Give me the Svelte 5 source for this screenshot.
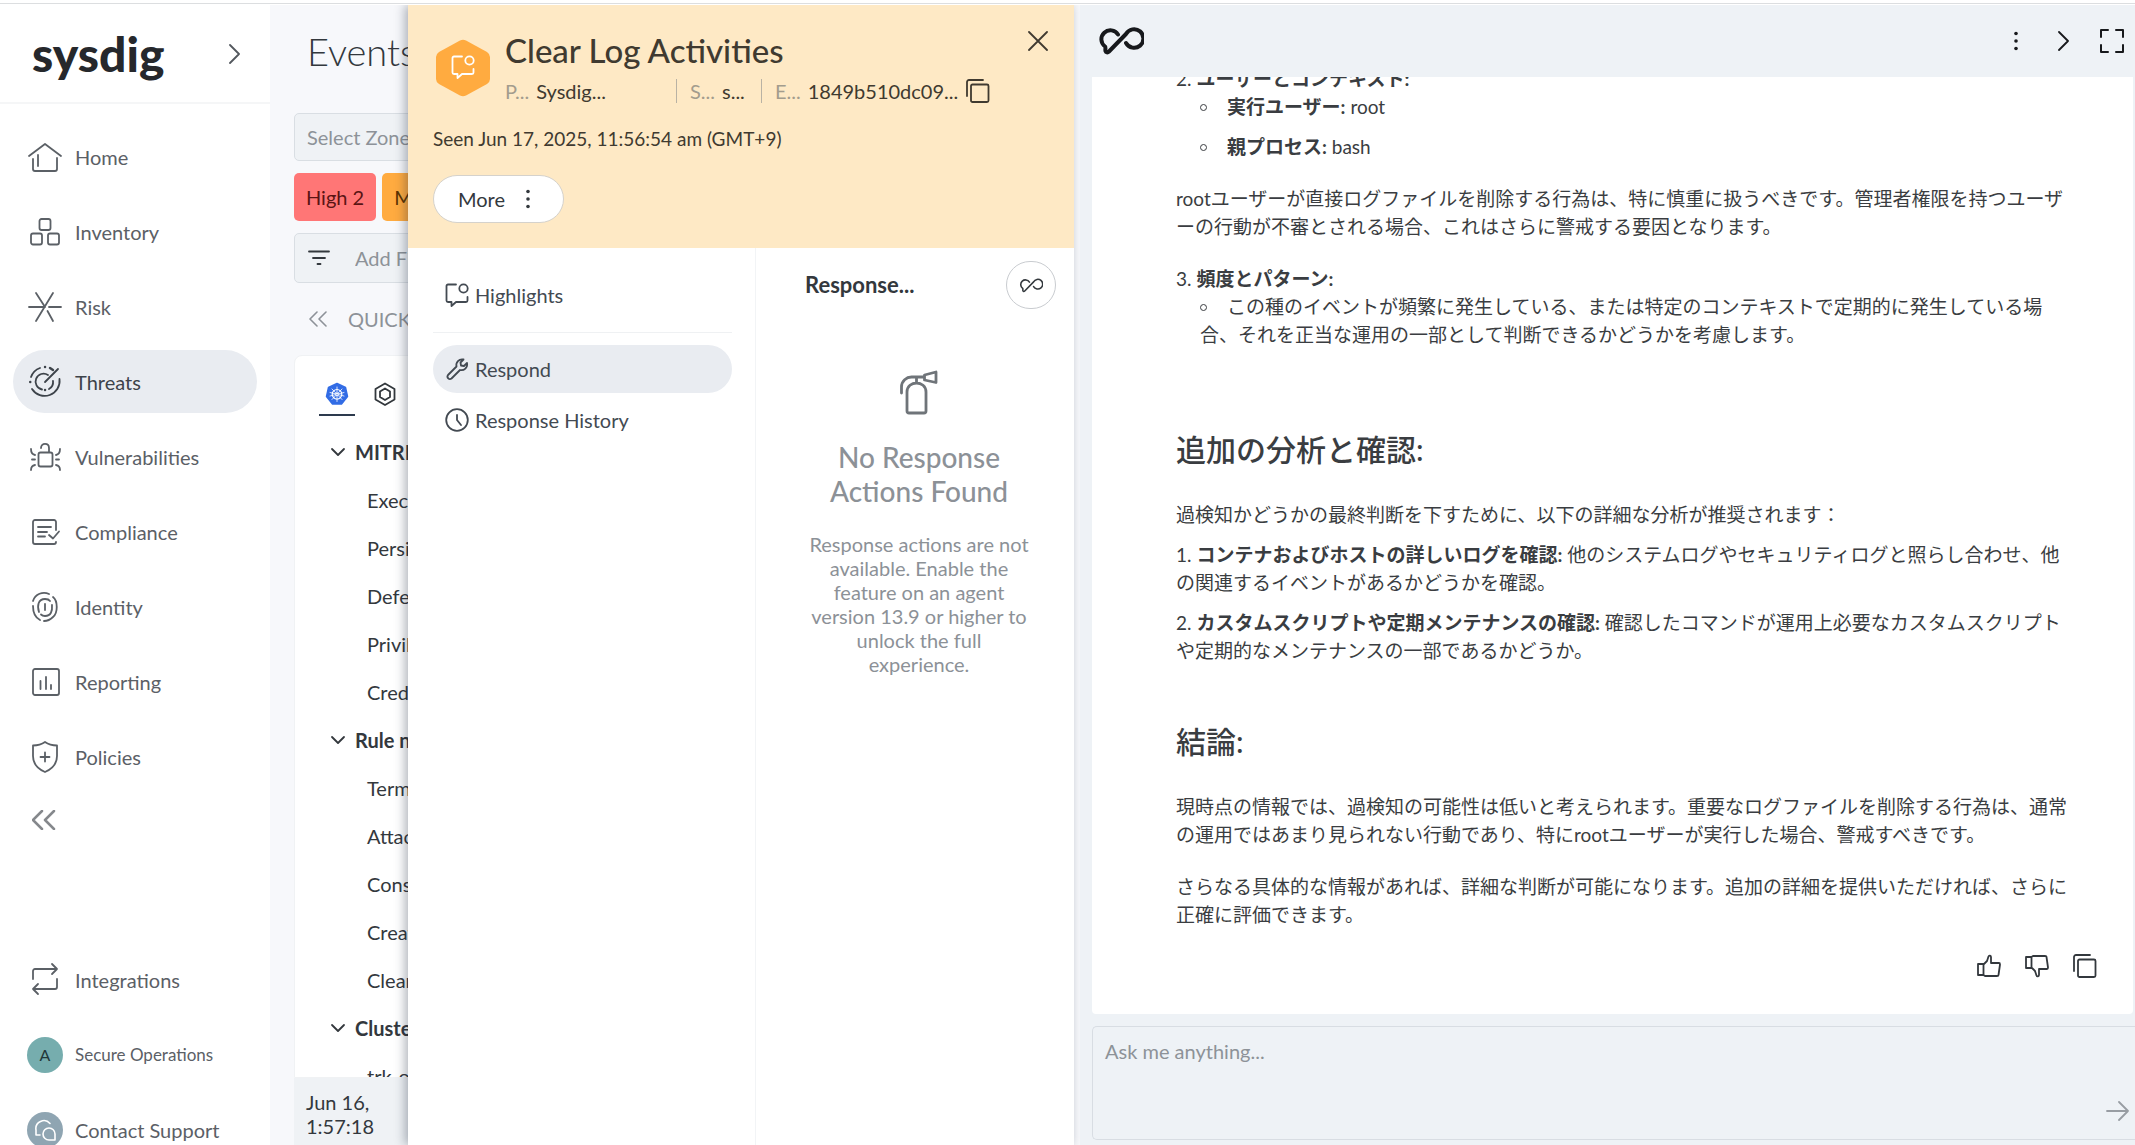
<script>
  let selectedNav = $state('Threats');
  let selectedTab = $state('Respond');
  let message = $state('');

  const navItems = ['Home', 'Inventory', 'Risk', 'Threats', 'Vulnerabilities', 'Compliance', 'Identity', 'Reporting', 'Policies'];

  const filterGroups = [
    { name: 'MITRE', items: ['Execution', 'Persistence', 'Defense Evasion', 'Privilege Escalation', 'Credential Access'] },
    { name: 'Rule name', items: ['Terminal shell', 'Attach to container', 'Console login', 'Create symlink', 'Clear Log Activities'] },
    { name: 'Cluster', items: ['trk-ops'] }
  ];
</script>

{#snippet navIcon(name)}
  <svg class="nav-icon" width="36" height="36" viewBox="0 0 36 36" fill="none" stroke="currentColor" stroke-width="1.8" stroke-linecap="round" stroke-linejoin="round">
    {#if name === 'Home'}
      <path d="M2 17 18 5l16 12M6 20v10a2 2 0 0 0 2 2h20a2 2 0 0 0 2-2V19M11 16v11" />
    {:else if name === 'Inventory'}
      <rect x="12.500" y="5" width="11" height="11" rx="2" />
      <rect x="4" y="19.500" width="11" height="11" rx="2" />
      <rect x="21" y="19.500" width="11" height="11" rx="2" />
    {:else if name === 'Risk'}
      <path d="M2 18h16M22 18h12M9 4l9 14M26 4 9 32M20.500 22 26 32" />
    {:else if name === 'Threats'}
      <path d="M32.500 15A15 15 0 0 1 5 25M4 13a15 15 0 0 1 9-9M18 18 31 5" />
      <path d="M21 11a8 8 0 1 0-6 14.500M26 17a8 8 0 0 1-4 8" />
      <path d="M18 3h.1M23 4l3 2M3.200 18h.1M18 26h.1" stroke-width="2.400" />
    {:else if name === 'Vulnerabilities'}
      <rect x="11.500" y="13.500" width="14" height="14" rx="2" />
      <path d="M14 9c0-5.500 8-5.500 8 0v4M4 10c0 3 1.500 5.500 4 6M5 20.500h3M4 31c0-3 1.500-4.500 4-5M33 10c0 3-1.500 5.500-4 6M32 20.500h-3M33 31c0-3-1.500-4.500-4-5" />
    {:else if name === 'Compliance'}
      <path d="M29 16V8a2 2 0 0 0-2-2H8a2 2 0 0 0-2 2v20a2 2 0 0 0 2 2h19a2 2 0 0 0 2-2M11 13h13M11 18h9M11 22.500h7M22 21l4 3.500 6-7" />
    {:else if name === 'Identity'}
      <path d="M6 12c2-7 10-10 16-7M26 8c5 4 5 16 0 20-3 3-6 4-9 4M13 31c-6-3-7-8-7-14" />
      <path d="M12 23c-2-6-1-13 6-13 3 0 4 .500 5 2M25 16c.5 6-1 11-7 11-2 0-3-.500-4-1.500M18 15v6" />
    {:else if name === 'Reporting'}
      <rect x="6" y="5" width="26" height="26" rx="2" />
      <path d="M13.500 17v8M19 13v12M24 21v4" />
    {:else if name === 'Policies'}
      <path d="M18 3c3.500 2.500 7.500 3.500 12 3.500V17c0 8-5 13-12 16C11 30 6 25 6 17V6.500C10.500 6.500 14.500 5.500 18 3zM18 13.500v9M13.500 18h9" />
    {:else if name === 'Integrations'}
      <path d="M6 17V9a2 2 0 0 1 2-2h22M25 2l5 5-5 5M30 17v8a2 2 0 0 1-2 2H6M11 22l-5 5 5 5" />
    {/if}
  </svg>
{/snippet}

{#snippet infinity(width, height, stroke)}
  <svg {width} {height} viewBox="0 0 46 28" fill="none" stroke="currentColor" stroke-width={stroke} stroke-linecap="round" stroke-linejoin="round">
    <path d="M20 7.500A9 9 0 1 0 7 19.500c1 1 0 3 .5 4.500s2 2 3.500.500L28 7a9.300 9.300 0 1 1 0 9" />
  </svg>
{/snippet}

{#snippet copyIcon()}
  <svg width="24" height="24" viewBox="0 0 24 24" fill="none" stroke="currentColor" stroke-width="1.8" stroke-linecap="round" stroke-linejoin="round">
    <rect x="5" y="5.500" width="17.500" height="17.500" rx="1.500" />
    <path d="M1 17V3a2 2 0 0 1 2-2h14" />
  </svg>
{/snippet}

{#snippet eventIcon()}
  <svg width="24" height="24" viewBox="0 0 24 24" fill="none" stroke="currentColor" stroke-width="1.800" stroke-linecap="round" stroke-linejoin="round">
    <path d="M11 1.500H3a1.500 1.500 0 0 0-1.500 1.500v14.500A1.500 1.500 0 0 0 3 19h3.500v4l4.500-4h10a1.500 1.500 0 0 0 1.500-1.500V14" />
    <circle cx="18.500" cy="5.500" r="4.200" />
  </svg>
{/snippet}

{#snippet dots()}
  <svg width="20" height="20" viewBox="0 0 20 20" fill="currentColor">
    <circle cx="10" cy="2.500" r="1.800" /><circle cx="10" cy="10" r="1.800" /><circle cx="10" cy="17.500" r="1.800" />
  </svg>
{/snippet}

{#snippet chevronRight()}
  <svg width="20" height="20" viewBox="0 0 20 20" fill="none" stroke="currentColor" stroke-width="1.800" stroke-linecap="round" stroke-linejoin="round"><path d="m5 1 9 9-9 9" /></svg>
{/snippet}

<div class="app">
  <aside class="sidebar">
    <div class="brand">
      <span class="logo">sysdig</span>
      <button class="icon-btn" aria-label="Expand">{@render chevronRight()}</button>
    </div>
    <nav class="nav">
      {#each navItems as item (item)}
        <button class="nav-item" class:active={item === selectedNav} onclick={() => (selectedNav = item)}>
          {@render navIcon(item)}
          <span>{item}</span>
        </button>
      {/each}
    </nav>
    <button class="icon-btn collapse" aria-label="Collapse menu">
      <svg width="24" height="20" viewBox="0 0 24 20" fill="none" stroke="currentColor" stroke-width="2.500" stroke-linecap="round" stroke-linejoin="round"><path d="m10 1-9 9 9 9M22 1l-9 9 9 9" /></svg>
    </button>
    <div class="nav">
      <button class="nav-item">
        {@render navIcon('Integrations')}
        <span>Integrations</span>
      </button>
      <button class="nav-item small">
        <span class="avatar">A</span>
        <span>Secure Operations</span>
      </button>
      <button class="nav-item">
        <span class="avatar support">
          <svg width="24" height="24" viewBox="0 0 24 24" fill="none" stroke="currentColor" stroke-width="1.600" stroke-linecap="round" stroke-linejoin="round">
            <path d="M17 5.500A8 8 0 0 0 3 12v5h4M22 22h-6a6 6 0 1 1 6-6z" />
          </svg>
        </span>
        <span>Contact Support</span>
      </button>
    </div>
  </aside>

  <main class="events">
    <h1>Events</h1>
    <input class="field" aria-label="Select Zones" placeholder="Select Zones" />
    <div class="severities">
      <button class="severity high">High 2</button>
      <button class="severity medium">Medium 14</button>
    </div>
    <label class="field filter">
      <svg width="24" height="16" viewBox="0 0 24 16" fill="none" stroke="currentColor" stroke-width="1.800" stroke-linecap="round"><path d="M2 1.500h20M6 8h12M10.500 14h3" /></svg>
      <input placeholder="Add Filter" />
    </label>
    <div class="quick">
      <svg width="18" height="16" viewBox="0 0 18 16" fill="none" stroke="currentColor" stroke-width="1.600" stroke-linecap="round" stroke-linejoin="round"><path d="M8 1 1 8l7 7M17 1l-7 7 7 7" /></svg>
      <span>QUICK FILTERS</span>
    </div>
    <section class="filters">
      <div class="filter-tabs">
        <button class="filter-tab active" aria-label="Kubernetes">
          <svg width="24" height="24" viewBox="0 0 24 24" fill="none" stroke="#fff" stroke-width="1.200" stroke-linecap="round">
            <path d="M12 1.500 20.500 5.500 22.500 14.500 16.500 22h-9L1.500 14.500 3.500 5.500z" fill="#326ce5" stroke="#326ce5" stroke-width="1.500" stroke-linejoin="round" />
            <circle cx="12" cy="12.300" r="4.800" />
            <path d="M12 5v14.500M5 10.500l14 3.500M7 17.500l10-10.500M7 7l10 10.500M5 14l14-3.500" stroke-width=".8" />
            <circle cx="12" cy="12.300" r="1.200" fill="#326ce5" />
          </svg>
        </button>
        <button class="filter-tab" aria-label="Hosts">
          <svg width="24" height="24" viewBox="0 0 24 24" fill="none" stroke="currentColor" stroke-width="1.800" stroke-linejoin="round">
            <path d="M12 1.500 21.500 7v10.500L12 23l-9.500-5.500V7z" /><path d="m12 6.500 5 3v5.500l-5 3-5-3V9.500z" />
          </svg>
        </button>
      </div>
      {#each filterGroups as group (group.name)}
        <div class="group-name">
          <svg width="16" height="10" viewBox="0 0 16 10" fill="none" stroke="currentColor" stroke-width="1.800" stroke-linecap="round" stroke-linejoin="round"><path d="m2 2 6 6 6-6" /></svg>
          {group.name}
        </div>
        {#each group.items as item (item)}
          <div class="group-item">{item}</div>
        {/each}
      {/each}
    </section>
    <div class="time-range">Jun 16,<br />1:57:18</div>

    <section class="drawer">
      <header class="drawer-header">
        <div class="event-summary">
          <div class="hexagon">
            <svg width="54" height="60" viewBox="0 0 54 60"><path d="M24 2.500q3-1.500 6 0l21 11.500q3 2 3 5v22q0 3-3 5L30 57.500q-3 1.500-6 0L3 46q-3-2-3-5V19q0-3 3-5z" fill="#ffab40" /></svg>
            <span class="hexagon-icon">{@render eventIcon()}</span>
          </div>
          <div class="event-info">
            <h2>Clear Log Activities</h2>
            <div class="event-meta">
              <span class="meta policy"><span class="meta-key">P...</span> Sysdig...</span>
              <span class="meta source"><span class="meta-key">S...</span> s...</span>
              <span class="meta event-id"><span class="meta-key">E...</span> 1849b510dc09...</span>
              <button class="icon-btn" aria-label="Copy event id">{@render copyIcon()}</button>
            </div>
          </div>
          <button class="icon-btn close" aria-label="Close">
            <svg width="20" height="20" viewBox="0 0 20 20" fill="none" stroke="currentColor" stroke-width="1.800" stroke-linecap="round"><path d="m1 1 18 18M19 1 1 19" /></svg>
          </button>
        </div>
        <p class="seen">Seen Jun 17, 2025, 11:56:54 am (GMT+9)</p>
        <button class="more">More {@render dots()}</button>
      </header>

      <div class="drawer-body">
        <nav class="tabs">
          <button class="tab" class:active={selectedTab === 'Highlights'} onclick={() => (selectedTab = 'Highlights')}>
            {@render eventIcon()} Highlights
          </button>
          <div class="divider"></div>
          <button class="tab" class:active={selectedTab === 'Respond'} onclick={() => (selectedTab = 'Respond')}>
            <svg width="24" height="24" viewBox="0 0 24 24" fill="none" stroke="currentColor" stroke-width="1.800" stroke-linejoin="round">
              <path d="m3 18 8.500-8.500C10.500 5.500 14 1.500 18.500 2.500L15.500 5.500l.5 3 3 .5 3-3c1 4.500-3 8-7 7L6.500 21.500a2.500 2.500 0 0 1-3.500-3.500z" />
            </svg>
            Respond
          </button>
          <button class="tab" class:active={selectedTab === 'Response History'} onclick={() => (selectedTab = 'Response History')}>
            <svg width="24" height="24" viewBox="0 0 24 24" fill="none" stroke="currentColor" stroke-width="1.800" stroke-linecap="round"><circle cx="12" cy="12" r="10.800" /><path d="M12 7v5l4 5" /></svg>
            Response History
          </button>
        </nav>
        <div class="response">
          <div class="response-header">
            <h3>Response...</h3>
            <button class="round-btn" aria-label="Ask Sage">{@render infinity(24, 15, 3)}</button>
          </div>
          <div class="empty">
            <svg width="40" height="46" viewBox="0 0 40 46" fill="none" stroke="#6f7479" stroke-width="2.800" stroke-linecap="round" stroke-linejoin="round">
              <path d="M8 42V23c0-12 19-12 19 0v19q0 2-2 2H10q-2 0-2-2zM17.500 13V9M2.500 24V18c0-6 5-10 10-10h13M25.500 6 37 3v10.500L25.500 11z" />
            </svg>
            <h4>No Response Actions Found</h4>
            <p>Response actions are not available. Enable the feature on an agent version 13.9 or higher to unlock the full experience.</p>
          </div>
        </div>
      </div>
    </section>
  </main>

  <aside class="assistant">
    <header class="assistant-header">
      {@render infinity(46, 28, 4)}
      <div class="assistant-actions">
        <button class="icon-btn" aria-label="Options">{@render dots()}</button>
        <button class="icon-btn" aria-label="Hide">{@render chevronRight()}</button>
        <button class="icon-btn" aria-label="Full screen">
          <svg width="24" height="24" viewBox="0 0 24 24" fill="none" stroke="currentColor" stroke-width="2" stroke-linecap="round" stroke-linejoin="round"><path d="M1 8V1h7M16 1h7v7M23 16v7h-7M8 23H1v-7" /></svg>
        </button>
      </div>
    </header>
    <div class="conversation" lang="ja">
      <div class="message">
        <p>2. <b>ユーザーとコンテキスト:</b></p>
        <ul class="spaced">
          <li><b>実行ユーザー:</b> root</li>
          <li><b>親プロセス:</b> bash</li>
        </ul>
        <p class="block">rootユーザーが直接ログファイルを削除する行為は、特に慎重に扱うべきです。管理者権限を持つユーザーの行動が不審とされる場合、これはさらに警戒する要因となります。</p>
        <p class="block">3. <b>頻度とパターン:</b></p>
        <ul>
          <li>この種のイベントが頻繁に発生している、または特定のコンテキストで定期的に発生している場合、それを正当な運用の一部として判断できるかどうかを考慮します。</li>
        </ul>
        <h2 class="first">追加の分析と確認:</h2>
        <p>過検知かどうかの最終判断を下すために、以下の詳細な分析が推奨されます：</p>
        <p class="step">1. <b>コンテナおよびホストの詳しいログを確認:</b> 他のシステムログやセキュリティログと照らし合わせ、他の関連するイベントがあるかどうかを確認。</p>
        <p class="step">2. <b>カスタムスクリプトや定期メンテナンスの確認:</b> 確認したコマンドが運用上必要なカスタムスクリプトや定期的なメンテナンスの一部であるかどうか。</p>
        <h2>結論:</h2>
        <p>現時点の情報では、過検知の可能性は低いと考えられます。重要なログファイルを削除する行為は、通常の運用ではあまり見られない行動であり、特にrootユーザーが実行した場合、警戒すべきです。</p>
        <p class="block">さらなる具体的な情報があれば、詳細な判断が可能になります。追加の詳細を提供いただければ、さらに正確に評価できます。</p>
      </div>
      <div class="feedback">
        <button class="icon-btn" aria-label="Good answer">
          <svg width="24" height="24" viewBox="0 0 24 24" fill="none" stroke="currentColor" stroke-width="1.800" stroke-linejoin="round"><path d="M1 10h5.500v11H1zM6.500 10.500 10 7l1.500-4.500c.5-1.500 2.500-1 2.500.5V9h8q1 0 1 1.500L21.500 21q0 1-1.500 1H8l-1.500-1" /></svg>
        </button>
        <button class="icon-btn" aria-label="Bad answer">
          <svg width="24" height="24" viewBox="0 0 24 24" fill="none" stroke="currentColor" stroke-width="1.800" stroke-linejoin="round"><path d="M1 3h5.500v11H1zM6.500 13.500 10 17l1.500 4.500c.5 1.500 2.500 1 2.500-.5V15h8q1 0 1-1.500L21.500 3q0-1-1.500-1H8L6.500 3" /></svg>
        </button>
        <button class="icon-btn" aria-label="Copy answer">{@render copyIcon()}</button>
      </div>
    </div>
    <div class="composer">
      <textarea aria-label="Message" placeholder="Ask me anything..." bind:value={message}></textarea>
      <button class="icon-btn send" aria-label="Send">
        <svg width="24" height="20" viewBox="0 0 24 20" fill="none" stroke="currentColor" stroke-width="1.800" stroke-linecap="round" stroke-linejoin="round"><path d="M1 10h21M13 1l9 9-9 9" /></svg>
      </button>
    </div>
  </aside>
</div>

<style>
  :global(body) {
    background: #fff;
  }

  .app {
    display: grid;
    grid-template-columns: 270px 810px minmax(0, 1fr);
    grid-template-rows: minmax(0, 1fr);
    box-sizing: border-box;
    height: 100vh;
    padding-top: 5px;
    background: linear-gradient(#fff 3px, #dcdee0 3px, #dcdee0 4px, #fff 4px);
    color: #33383d;
    font-family: Lato, "Noto Sans CJK JP", sans-serif;
    font-size: 20px;
    line-height: 24px;
    overflow: hidden;
  }

  h1, h2, h3, h4, p, ul {
    margin: 0;
    padding: 0;
  }

  button, input, textarea {
    font: inherit;
    color: inherit;
  }

  button {
    cursor: pointer;
  }

  svg {
    flex: none;
    display: block;
  }

  .icon-btn {
    display: flex;
    align-items: center;
    justify-content: center;
    padding: 0;
    border: none;
    background: none;
  }

  /* Sidebar */
  .sidebar {
    overflow: hidden;
    background: #fff;
  }

  .brand {
    display: flex;
    align-items: center;
    justify-content: space-between;
    box-sizing: border-box;
    height: 99px;
    padding: 0 25px 0 32px;
    border-bottom: 2px solid #f5f6f7;
    color: #53585e;
  }

  .logo {
    color: #26282c;
    font-size: 48px;
    font-weight: 900;
    line-height: 48px;
  }

  .nav {
    display: flex;
    flex-direction: column;
    gap: 12px;
    padding: 21px 13px 0;
  }

  .nav-item {
    display: flex;
    align-items: center;
    gap: 12px;
    height: 63px;
    padding: 0 14px;
    border: none;
    border-radius: 32px;
    background: none;
    color: #5b6066;
    text-align: left;
  }

  .nav-item.active {
    background: #e9ecf1;
    color: #3d434a;
  }

  .nav-item.small {
    font-size: 17px;
  }

  .avatar {
    display: flex;
    align-items: center;
    justify-content: center;
    width: 36px;
    height: 36px;
    border-radius: 50%;
    background: #76adae;
    color: #22373a;
    font-size: 16px;
  }

  .avatar.support {
    background: #8fa5b2;
    color: #fff;
  }

  .collapse {
    height: 36px;
    margin: 14px 0 89px 32px;
    color: #85888c;
  }

  /* Events page behind the drawer */
  .events {
    position: relative;
    display: flex;
    flex-direction: column;
    padding: 0 6px 0 24px;
    background: #f7f8fb;
    overflow: hidden;
  }

  h1 {
    padding: 24px 13px 40px;
    font-size: 38px;
    font-weight: 300;
    line-height: 44px;
  }

  .field {
    box-sizing: border-box;
    height: 48px;
    flex: none;
    padding: 0 12px;
    border: 1px solid #d9dee3;
    border-radius: 5px;
    background: #eff2f5;
  }

  .field::placeholder, .filter input::placeholder {
    color: #8d9298;
    opacity: 1;
  }

  .filter {
    display: flex;
    align-items: center;
    gap: 24px;
    height: 50px;
  }

  .filter input {
    flex: 1;
    padding: 0;
    border: none;
    background: none;
  }

  .severities {
    display: flex;
    gap: 6px;
    margin: 12px 0;
  }

  .severity {
    height: 48px;
    padding: 0 12px;
    border: none;
    border-radius: 5px;
  }

  .severity.high {
    background: #ff7676;
    color: #5a1414;
  }

  .severity.medium {
    background: #ffab40;
    color: #5c3300;
  }

  .quick {
    display: flex;
    align-items: center;
    gap: 21px;
    height: 72px;
    flex: none;
    padding-left: 15px;
    color: #8d9298;
  }

  .filters {
    flex: 1;
    min-height: 0;
    border: 1px solid #f0f2f4;
    border-radius: 8px 0 0 0;
    background: #fff;
    overflow: hidden;
  }

  .filter-tabs {
    display: flex;
    gap: 12px;
    padding: 14px 24px 12px;
  }

  .filter-tab {
    display: flex;
    justify-content: center;
    width: 36px;
    height: 46px;
    padding: 12px 0 0;
    border: none;
    border-bottom: 2px solid transparent;
    background: none;
  }

  .filter-tab.active {
    border-color: #2d3a4d;
  }

  .group-name, .group-item {
    display: flex;
    align-items: center;
    gap: 9px;
    height: 48px;
    white-space: nowrap;
  }

  .group-name {
    padding-left: 35px;
    font-weight: 700;
  }

  .group-item {
    padding-left: 72px;
  }

  .time-range {
    height: 67px;
    flex: none;
    box-sizing: border-box;
    padding: 12px 12px 0;
    background: #eff2f5;
    overflow: hidden;
  }

  /* Drawer */
  .drawer {
    position: absolute;
    top: 0;
    right: 6px;
    bottom: 0;
    left: 138px;
    display: flex;
    flex-direction: column;
    background: #fff;
    box-shadow: -3px 0 10px rgba(30, 40, 60, 0.35);
  }

  .drawer-header {
    height: 243px;
    flex: none;
    box-sizing: border-box;
    padding: 25px 25px 0;
    background: #fee9c5;
    color: #403a30;
  }

  .event-summary {
    display: flex;
    align-items: flex-start;
  }

  .hexagon {
    position: relative;
    padding: 8px 15px 0 3px;
  }

  .hexagon-icon {
    position: absolute;
    top: 25px;
    left: 18px;
    color: #fff;
  }

  .event-info {
    flex: 1;
  }

  .event-info h2 {
    padding: 1px 0 4px;
    font-size: 33px;
    font-weight: 500;
    line-height: 38px;
  }

  .event-meta {
    display: flex;
    align-items: center;
    height: 24px;
    margin-top: 6px;
    white-space: nowrap;
  }

  .meta {
    display: flex;
    gap: 7px;
    box-sizing: border-box;
  }

  .meta-key {
    color: #a39c8d;
  }

  .policy {
    width: 171px;
  }

  .source, .event-id {
    padding-left: 13px;
    border-left: 1px solid #b9b2a4;
  }

  .source {
    width: 85px;
  }

  .event-id {
    margin-right: 8px;
  }

  .close {
    width: 22px;
    height: 22px;
  }

  .seen {
    margin: 23px 0;
    font-size: 19px;
    line-height: 26px;
  }

  .more {
    display: flex;
    align-items: center;
    gap: 13px;
    height: 48px;
    padding: 0 25px 0 24px;
    border: 1px solid #d5d2cc;
    border-radius: 24px;
    background: #fff;
    color: #33383d;
  }

  .drawer-body {
    display: flex;
    flex: 1;
  }

  .tabs {
    display: flex;
    flex-direction: column;
    width: 348px;
    box-sizing: border-box;
    padding: 23px 23px 0 25px;
    border-right: 1px solid #f2f4f6;
  }

  .tab {
    display: flex;
    align-items: center;
    gap: 6px;
    height: 48px;
    margin-bottom: 3px;
    padding: 0 12px;
    border: none;
    border-radius: 24px;
    background: none;
    color: #434a52;
  }

  .tab.active {
    background: #e9ecf1;
  }

  .divider {
    height: 1px;
    margin: 10px 0 12px;
    background: #eff1f3;
  }

  .response {
    flex: 1;
    padding: 13px 18px 0 49px;
  }

  .response-header {
    display: flex;
    align-items: center;
    justify-content: space-between;
  }

  .response-header h3 {
    font-size: 22px;
    font-weight: 700;
  }

  .round-btn {
    display: flex;
    align-items: center;
    justify-content: center;
    width: 50px;
    height: 48px;
    padding: 0;
    border: 1px solid #c9ccd0;
    border-radius: 25px;
    background: #fff;
  }

  .empty {
    display: flex;
    flex-direction: column;
    align-items: center;
    width: 228px;
    padding-top: 60px;
    color: #8c9197;
    text-align: center;
  }

  .empty h4 {
    margin: 25px 0 24px;
    font-size: 28px;
    font-weight: 500;
    line-height: 34px;
  }

  /* Assistant */
  .assistant {
    display: flex;
    flex-direction: column;
    padding-left: 12px;
    background: #eef2f6;
  }

  .assistant-header {
    display: flex;
    align-items: center;
    justify-content: space-between;
    height: 72px;
    flex: none;
    padding: 0 11px 0 6px;
    color: #17191c;
  }

  .assistant-actions {
    display: flex;
    align-items: center;
    gap: 24px;
  }

  .assistant-actions .icon-btn {
    width: 24px;
    height: 24px;
  }

  .conversation {
    display: flex;
    flex: 1;
    flex-direction: column;
    justify-content: flex-end;
    min-height: 0;
    padding: 0 36px 36px 84px;
    margin-right: 2px;
    border-radius: 0 0 4px 4px;
    background: #fff;
    overflow: hidden;
    font-size: 19px;
    line-height: 28px;
  }

  .message {
    padding-right: 25px;
    color: #3a3d41;
  }

  .message .block {
    margin-top: 24px;
  }

  .message .step {
    margin-top: 12px;
  }

  .message ul {
    padding-left: 24px;
    list-style: none;
  }

  .message li::before {
    content: "";
    display: inline-block;
    box-sizing: border-box;
    width: 7px;
    height: 7px;
    margin: 0 20px 3px 0;
    border: 1px solid #3a3d41;
    border-radius: 50%;
  }

  .spaced li + li {
    margin-top: 12px;
  }

  .message h2 {
    margin: 58px 0 34px;
    font-size: 30px;
    font-weight: 500;
    line-height: 36px;
  }

  .message h2.first {
    margin-top: 82px;
  }

  .feedback {
    display: flex;
    justify-content: flex-end;
    gap: 24px;
    margin-top: 25px;
  }

  .composer {
    display: flex;
    align-items: flex-end;
    height: 114px;
    flex: none;
    box-sizing: border-box;
    margin: 12px 0 5px;
    border: 1px solid #d8dde3;
    border-right: none;
    border-radius: 5px 0 0 5px;
  }

  .composer textarea {
    flex: 1;
    align-self: stretch;
    padding: 12px;
    border: none;
    outline: none;
    resize: none;
    background: none;
  }

  .composer textarea::placeholder {
    color: #8d9298;
    opacity: 1;
  }

  .send {
    height: 20px;
    margin: 0 5px 18px;
    color: #989da3;
  }
</style>
